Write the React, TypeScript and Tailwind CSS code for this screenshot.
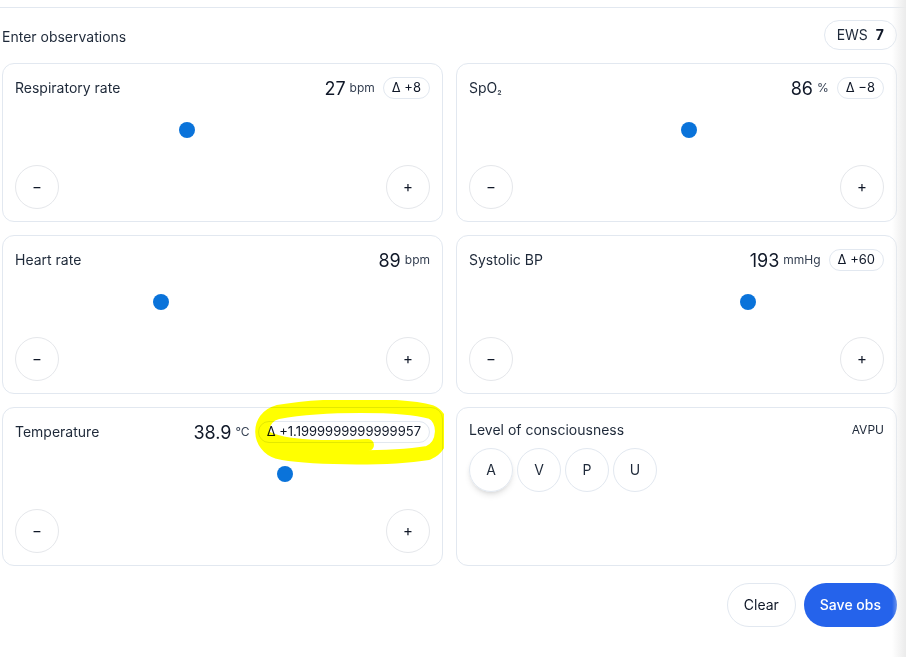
import React from "react";

type Vital = {
  label: React.ReactNode;
  value: string;
  unit: string;
  delta?: string;
  pos: number;
  highlight?: boolean;
};

const vitals: Vital[] = [
  { label: "Respiratory rate", value: "27", unit: "bpm", delta: "+8", pos: 0.41 },
  {
    label: (
      <>
        SpO<span className="text-[10px]">₂</span>
      </>
    ),
    value: "86",
    unit: "%",
    delta: "−8",
    pos: 0.5325,
  },
  { label: "Heart rate", value: "89", unit: "bpm", pos: 0.345 },
  { label: "Systolic BP", value: "193", unit: "mmHg", delta: "+60", pos: 0.68 },
  {
    label: "Temperature",
    value: "38.9",
    unit: "°C",
    delta: "+1.1999999999999957",
    pos: 0.6575,
    highlight: true,
  },
];

// yellow marker scribble drawn over the temperature delta
const Highlight = () => (
  <svg
    className="pointer-events-none absolute left-0 top-[-8px] mix-blend-multiply"
    width="441"
    height="70"
    viewBox="0 0 441 70"
  >
    <path
      d="M275 12 C320 4, 400 4, 428 12 C443 18, 443 46, 425 53 C380 60, 300 58, 275 52 C255 46, 253 18, 275 12 Z"
      fill="none"
      stroke="#ffff00"
      strokeWidth="14"
      strokeLinejoin="round"
    />
    <path
      d="M262 36 C280 47, 330 47, 365 45"
      fill="none"
      stroke="#ffff00"
      strokeWidth="12"
      strokeLinecap="round"
    />
  </svg>
);

const VitalCard = ({ v }: { v: Vital }) => (
  <div className="relative flex h-[159px] flex-col rounded-xl border border-slate-200 bg-white p-3">
    <div className="flex h-6 items-center justify-between">
      <span className="text-sm text-gray-800">{v.label}</span>
      <div className="flex items-center">
        <span className="text-[18px] text-gray-900">{v.value}</span>
        <span className="ml-1 text-xs text-gray-700">{v.unit}</span>
        {v.delta && (
          <span className="ml-2 flex h-[22px] items-center rounded-full border border-slate-200 bg-white px-2 text-[13px] text-gray-900">
            Δ {v.delta}
          </span>
        )}
      </div>
    </div>

    <div className="relative mt-[22px] h-4">
      <div
        className="absolute top-0 h-4 w-4 rounded-full bg-[#0a73da]"
        style={{ left: `calc((100% - 16px) * ${v.pos})` }}
      />
    </div>

    <div className="mt-auto flex justify-between">
      <button className="flex h-11 w-11 items-center justify-center rounded-full border border-gray-200 text-[15px] text-gray-900">
        −
      </button>
      <button className="flex h-11 w-11 items-center justify-center rounded-full border border-gray-200 text-[15px] text-gray-900">
        +
      </button>
    </div>

    {v.highlight && <Highlight />}
  </div>
);

export default function App() {
  return (
    <div className="relative h-[657px] w-full overflow-hidden bg-white font-['Inter',sans-serif]">
      <div className="h-2 border-b border-slate-200" />

      <div className="pl-[2px] pr-[9px]">
        {/* Header */}
        <div className="mt-3 flex h-[30px] items-center justify-between">
          <span className="mt-[3px] text-sm text-gray-800">Enter observations</span>
          <span className="flex h-[30px] items-center gap-2 rounded-full border border-slate-200 px-3 text-sm text-gray-800">
            EWS <b className="font-bold text-gray-900">7</b>
          </span>
        </div>

        {/* Vitals */}
        <div className="mt-[13px] grid grid-cols-2 gap-[13px]">
          {vitals.map((v, i) => (
            <VitalCard key={i} v={v} />
          ))}

          <div className="flex h-[159px] flex-col rounded-xl border border-slate-200 bg-white p-3">
            <div className="flex h-5 items-center justify-between">
              <span className="text-sm text-gray-800">Level of consciousness</span>
              <span className="text-xs text-gray-800">AVPU</span>
            </div>
            <div className="mt-2 flex gap-1">
              {["A", "V", "P", "U"].map((l) => (
                <button
                  key={l}
                  className={
                    "flex h-11 w-11 items-center justify-center rounded-full border border-slate-200 text-sm text-gray-800 " +
                    (l === "A" ? "shadow-md" : "")
                  }
                >
                  {l}
                </button>
              ))}
            </div>
          </div>
        </div>

        {/* Actions */}
        <div className="mt-[17px] flex justify-end gap-2">
          <button className="h-11 rounded-full border border-slate-200 px-4 text-sm text-gray-900">
            Clear
          </button>
          <button className="h-11 rounded-full bg-[#2563eb] px-4 text-sm font-medium text-white">
            Save obs
          </button>
        </div>
      </div>

      {/* right edge fade */}
      <div className="pointer-events-none absolute right-0 top-0 h-full w-[14px] bg-linear-to-r from-white/0 to-[#ebebeb]" />
    </div>
  );
}
